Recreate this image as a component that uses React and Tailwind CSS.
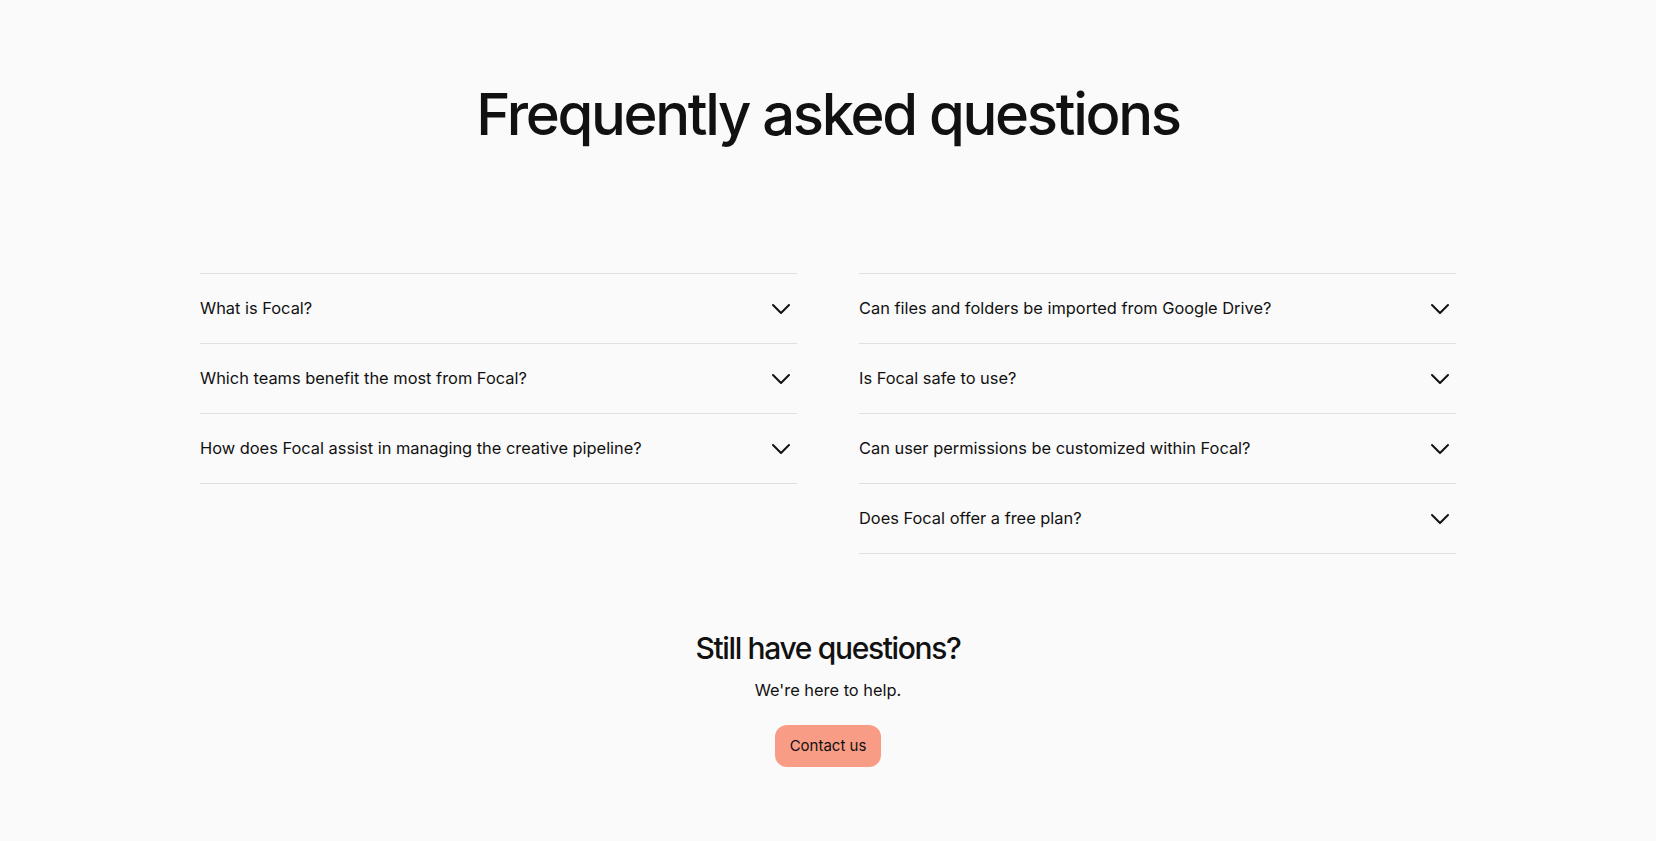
import { ChevronDown } from "lucide-react"

const leftQuestions = [
    "What is Focal?",
    "Which teams benefit the most from Focal?",
    "How does Focal assist in managing the creative pipeline?",
]

const rightQuestions = [
    "Can files and folders be imported from Google Drive?",
    "Is Focal safe to use?",
    "Can user permissions be customized within Focal?",
    "Does Focal offer a free plan?",
]

const FaqItem = ({ question }) => {
    return (
        <button className="flex h-[70px] w-full items-center justify-between border-b border-[#e0e0e0] text-left">
            <span className="text-[16.4px] text-[#111]">{question}</span>
            <ChevronDown size={32} strokeWidth={1.5} className="text-[#111] shrink-0" />
        </button>
    )
}

const FaqColumn = ({ questions }) => {
    return (
        <div className="border-t border-[#e0e0e0]">
            {questions.map((q) => (
                <FaqItem key={q} question={q} />
            ))}
        </div>
    )
}

const App = () => {
    return (
        <main className="min-h-screen bg-[#fafafa] pt-[84px] pb-[74px] font-['Inter',sans-serif] text-[#111]">
            <h1 className="text-center text-[58px] leading-[60px] font-medium tracking-[-0.04em]">
                Frequently asked questions
            </h1>

            <div className="mx-auto mt-[129px] grid w-[1256px] grid-cols-2 items-start gap-x-[62px]">
                <FaqColumn questions={leftQuestions} />
                <FaqColumn questions={rightQuestions} />
            </div>

            <section className="mt-[74px] flex flex-col items-center">
                <h2 className="text-[30px] leading-[40px] font-medium tracking-[-0.045em]">Still have questions?</h2>
                <p className="mt-[10px] text-[16.4px] leading-[24px]">We're here to help.</p>
                <button className="mt-[23px] h-[42px] w-[106px] rounded-[12px] bg-[#f89c86] text-[15px] text-[#111]">
                    Contact us
                </button>
            </section>
        </main>
    )
}

export default App
